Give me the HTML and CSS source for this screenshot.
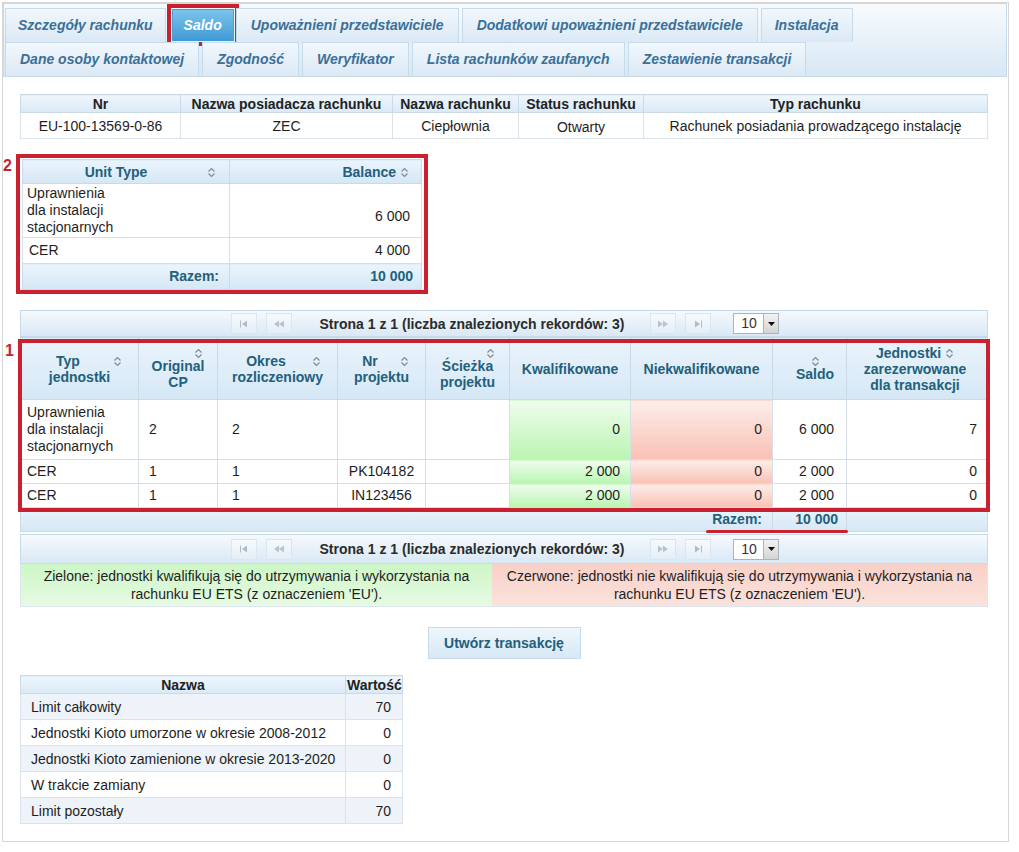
FILE: index.html
```html
<!DOCTYPE html>
<html lang="pl">
<head>
<meta charset="utf-8">
<title>Saldo</title>
<link rel="stylesheet" href="styles.css">
</head>
<body>
<div class="frame">
  <ul class="tabs">
    <li class="tab t1">Szczegóły rachunku</li>
    <li class="tab active">Saldo</li>
    <li class="tab">Upoważnieni przedstawiciele</li>
    <li class="tab">Dodatkowi upoważnieni przedstawiciele</li>
    <li class="tab t-inst">Instalacja</li>
    <li class="tab">Dane osoby kontaktowej</li>
    <li class="tab">Zgodność</li>
    <li class="tab">Weryfikator</li>
    <li class="tab">Lista rachunków zaufanych</li>
    <li class="tab">Zestawienie transakcji</li>
  </ul>

  <div class="panel">
    <table class="info">
      <colgroup><col class="c160"><col class="c212"><col class="c126"><col class="c125"><col></colgroup>
      <thead>
        <tr><th>Nr</th><th>Nazwa posiadacza rachunku</th><th>Nazwa rachunku</th><th>Status rachunku</th><th>Typ rachunku</th></tr>
      </thead>
      <tbody>
        <tr><td>EU-100-13569-0-86</td><td>ZEC</td><td>Ciepłownia</td><td class="status">Otwarty</td><td>Rachunek posiadania prowadzącego instalację</td></tr>
      </tbody>
    </table>

    <div class="annot2">
      <span class="annot-num num2">2</span>
      <table class="units">
        <colgroup><col class="c207"><col></colgroup>
        <thead>
          <tr>
            <th class="ut"><svg class="si si-float" width="9" height="11" viewBox="0 0 9 11"><path d="M1.5 4.5L4.5 1.5L7.5 4.5M1.5 6.5L4.5 9.5L7.5 6.5"/></svg>Unit Type</th>
            <th class="right">Balance <svg class="si" width="9" height="11" viewBox="0 0 9 11"><path d="M1.5 4.5L4.5 1.5L7.5 4.5M1.5 6.5L4.5 9.5L7.5 6.5"/></svg></th>
          </tr>
        </thead>
        <tbody>
          <tr class="tall"><td>Uprawnienia<br>dla instalacji<br>stacjonarnych</td><td class="right low">6 000</td></tr>
          <tr><td class="cer">CER</td><td class="right">4 000</td></tr>
        </tbody>
        <tfoot>
          <tr><td class="right">Razem:</td><td class="right">10 000</td></tr>
        </tfoot>
      </table>
    </div>

    <div class="grid-block">
      <div class="pager">
        <span class="pbtn first"><svg width="10" height="8" viewBox="0 0 10 8"><path d="M1.5 0.5V7.5" stroke="#aebcc7"/><path d="M8 0.5L3 4L8 7.5Z" fill="#aebcc7"/></svg></span>
        <span class="pbtn prev"><svg width="12" height="8" viewBox="0 0 12 8"><path d="M6 0.5L1 4L6 7.5ZM11 0.5L6 4L11 7.5Z" fill="#b7c4ce"/></svg></span>
        <span class="ptext">Strona 1 z 1 (liczba znalezionych rekordów: 3)</span>
        <span class="pbtn next"><svg width="12" height="8" viewBox="0 0 12 8"><path d="M1 0.5L6 4L1 7.5ZM6 0.5L11 4L6 7.5Z" fill="#b7c4ce"/></svg></span>
        <span class="pbtn last"><svg width="10" height="8" viewBox="0 0 10 8"><path d="M2 0.5L7 4L2 7.5Z" fill="#aebcc7"/><path d="M8.5 0.5V7.5" stroke="#aebcc7"/></svg></span>
        <span class="psel"><span class="psel-val">10</span><span class="psel-btn"><svg width="7" height="4" viewBox="0 0 7 4"><path d="M0 0H7L3.5 4Z" fill="#111"/></svg></span></span>
      </div>

      <div class="main-wrap">
        <table class="main">
          <colgroup>
            <col class="w118"><col class="w79"><col class="w120"><col class="w88"><col class="w84"><col class="w121"><col class="w142"><col class="w74"><col>
          </colgroup>
          <thead>
            <tr>
              <th><svg class="si si-float" width="9" height="11" viewBox="0 0 9 11"><path d="M1.5 4.5L4.5 1.5L7.5 4.5M1.5 6.5L4.5 9.5L7.5 6.5"/></svg>Typ<br>jednostki</th>
              <th><span class="si-top"><svg class="si" width="9" height="11" viewBox="0 0 9 11"><path d="M1.5 4.5L4.5 1.5L7.5 4.5M1.5 6.5L4.5 9.5L7.5 6.5"/></svg></span>Original<br>CP</th>
              <th><svg class="si si-float" width="9" height="11" viewBox="0 0 9 11"><path d="M1.5 4.5L4.5 1.5L7.5 4.5M1.5 6.5L4.5 9.5L7.5 6.5"/></svg>Okres<br>rozliczeniowy</th>
              <th><svg class="si si-float" width="9" height="11" viewBox="0 0 9 11"><path d="M1.5 4.5L4.5 1.5L7.5 4.5M1.5 6.5L4.5 9.5L7.5 6.5"/></svg>Nr<br>projektu</th>
              <th><span class="si-top"><svg class="si" width="9" height="11" viewBox="0 0 9 11"><path d="M1.5 4.5L4.5 1.5L7.5 4.5M1.5 6.5L4.5 9.5L7.5 6.5"/></svg></span>Ścieżka<br>projektu</th>
              <th>Kwalifikowane</th>
              <th>Niekwalifikowane</th>
              <th class="saldo-h"><span class="si-top"><svg class="si" width="9" height="11" viewBox="0 0 9 11"><path d="M1.5 4.5L4.5 1.5L7.5 4.5M1.5 6.5L4.5 9.5L7.5 6.5"/></svg></span>Saldo</th>
              <th class="right">Jednostki <svg class="si" width="9" height="11" viewBox="0 0 9 11"><path d="M1.5 4.5L4.5 1.5L7.5 4.5M1.5 6.5L4.5 9.5L7.5 6.5"/></svg><br>zarezerwowane<br>dla transakcji</th>
            </tr>
          </thead>
          <tbody>
            <tr class="tall">
              <td>Uprawnienia<br>dla instalacji<br>stacjonarnych</td>
              <td class="pad10">2</td>
              <td class="pad14">2</td>
              <td class="center"></td>
              <td></td>
              <td class="right green">0</td>
              <td class="right red">0</td>
              <td class="right saldo">6 000</td>
              <td class="right">7</td>
            </tr>
            <tr>
              <td>CER</td>
              <td class="pad10">1</td>
              <td class="pad14">1</td>
              <td class="center">PK104182</td>
              <td></td>
              <td class="right green">2 000</td>
              <td class="right red">0</td>
              <td class="right saldo">2 000</td>
              <td class="right">0</td>
            </tr>
            <tr>
              <td>CER</td>
              <td class="pad10">1</td>
              <td class="pad14">1</td>
              <td class="center">IN123456</td>
              <td></td>
              <td class="right green">2 000</td>
              <td class="right red">0</td>
              <td class="right saldo">2 000</td>
              <td class="right">0</td>
            </tr>
          </tbody>
          <tfoot>
            <tr><td colspan="7" class="right">Razem:</td><td class="right saldo-f">10 000</td><td></td></tr>
          </tfoot>
        </table>
        <div class="redbox"></div>
        <span class="annot-num num1">1</span>
        <span class="underline"></span>
      </div>

      <div class="pager pager2">
        <span class="pbtn first"><svg width="10" height="8" viewBox="0 0 10 8"><path d="M1.5 0.5V7.5" stroke="#aebcc7"/><path d="M8 0.5L3 4L8 7.5Z" fill="#aebcc7"/></svg></span>
        <span class="pbtn prev"><svg width="12" height="8" viewBox="0 0 12 8"><path d="M6 0.5L1 4L6 7.5ZM11 0.5L6 4L11 7.5Z" fill="#b7c4ce"/></svg></span>
        <span class="ptext">Strona 1 z 1 (liczba znalezionych rekordów: 3)</span>
        <span class="pbtn next"><svg width="12" height="8" viewBox="0 0 12 8"><path d="M1 0.5L6 4L1 7.5ZM6 0.5L11 4L6 7.5Z" fill="#b7c4ce"/></svg></span>
        <span class="pbtn last"><svg width="10" height="8" viewBox="0 0 10 8"><path d="M2 0.5L7 4L2 7.5Z" fill="#aebcc7"/><path d="M8.5 0.5V7.5" stroke="#aebcc7"/></svg></span>
        <span class="psel"><span class="psel-val">10</span><span class="psel-btn"><svg width="7" height="4" viewBox="0 0 7 4"><path d="M0 0H7L3.5 4Z" fill="#111"/></svg></span></span>
      </div>

      <div class="legend">
        <div class="leg-green">Zielone: jednostki kwalifikują się do utrzymywania i wykorzystania na rachunku EU ETS (z oznaczeniem 'EU').</div>
        <div class="leg-red">Czerwone: jednostki nie kwalifikują się do utrzymywania i wykorzystania na rachunku EU ETS (z oznaczeniem 'EU').</div>
      </div>
    </div>

    <div class="btn-row"><button class="btn" type="button">Utwórz transakcję</button></div>

    <table class="limits">
      <colgroup><col class="c325"><col></colgroup>
      <thead><tr><th>Nazwa</th><th>Wartość</th></tr></thead>
      <tbody>
        <tr class="odd"><td>Limit całkowity</td><td class="right">70</td></tr>
        <tr><td>Jednostki Kioto umorzone w okresie 2008-2012</td><td class="right">0</td></tr>
        <tr class="odd"><td>Jednostki Kioto zamienione w okresie 2013-2020</td><td class="right">0</td></tr>
        <tr><td>W trakcie zamiany</td><td class="right">0</td></tr>
        <tr class="odd"><td>Limit pozostały</td><td class="right">70</td></tr>
      </tbody>
    </table>
  </div>
</div>
</body>
</html>
```

FILE: styles.css
```css
* { box-sizing: border-box; }

body {
  margin: 0;
  font-family: "Liberation Sans", Arial, sans-serif;
  font-size: 14px;
  color: #1e1e1e;
  background: #fff;
}

.frame {
  margin: 2px 0 0 2px;
  width: 1007px;
  height: 840px;
  border: 1px solid #d6d6d6;
  padding: 0 1px 0 0;
}

/* ---------- tabs ---------- */
.tabs {
  list-style: none;
  margin: 0;
  padding: 4px 1px 0 1px;
  height: 74px;
  display: flex;
  flex-wrap: wrap;
  align-content: flex-start;
  border: 1px solid #c5dbec;
  background: linear-gradient(#f8fbfd, #d7e7f4);
}

.tab {
  height: 34px;
  padding: 8px 14px 0 14px;
  margin-right: 3px;
  line-height: 17px;
  font-weight: bold;
  font-style: italic;
  color: #3a7099;
  border: 1px solid #c5dbec;
  border-bottom: 0;
  background: linear-gradient(#f1f7fc, #dbe9f5);
  white-space: nowrap;
}
.tab.t1 { padding: 8px 12px 0 12px; }
.tab.t-inst { padding: 8px 13px 0 13px; }

.tab.active {
  height: 32px;
  margin: 1px 2px 0 3px;
  padding: 7px 11px 0 11px;
  color: #fff;
  border-color: #4a9fd3;
  background: linear-gradient(#7cc4ec, #3e9ad5);
  outline: 4px solid #c9212f;
  outline-offset: 1px;
}

/* ---------- panel ---------- */
.panel {
  padding: 17px 19px 0 17px;
}

table {
  border-collapse: collapse;
  table-layout: fixed;
}

.right { text-align: right; }
.center { text-align: center; }

/* info table */
.info {
  width: 968px;
  border: 1px solid #c9d9e6;
}
.info th {
  height: 18px;
  padding: 0 3px;
  font-weight: bold;
  color: #222;
  border: 1px solid #c9d9e6;
  background: linear-gradient(#eef6fc, #d9e9f6);
  line-height: 16px;
}
.info td {
  height: 26px;
  padding: 0 3px;
  text-align: center;
  border: 1px solid #dbe3ea;
}
.info td.status { padding-top: 3px; }
.c160 { width: 160px; }
.c212 { width: 212px; }
.c126 { width: 126px; }
.c125 { width: 125px; }

/* annotations */
.annot-num {
  position: absolute;
  font-weight: bold;
  font-size: 16px;
  line-height: 16px;
  color: #c0262f;
}

.annot2 {
  position: relative;
  display: inline-block;
  margin: 15px 0 0 -4px;
  border: 4px solid #c9212f;
  padding: 1px 2px 0 2px;
  vertical-align: top;
}
.num2 { left: -17px; top: 0; }

/* unit table */
.units {
  width: 400px;
  border: 1px solid #c9d9e6;
}
.units th {
  height: 24px;
  padding: 0 12px 0 6px;
  font-weight: bold;
  color: #22607c;
  border: 1px solid #c9d9e6;
  background: linear-gradient(#eaf4fc, #d5e7f5);
}
.units th.ut { padding-right: 13px; }
.units td {
  padding: 1px 11px 1px 4px;
  line-height: 17px;
  height: 26px;
  border: 1px solid #d6dfe7;
  vertical-align: middle;
}
.units td.low { padding-top: 12px; }
.units td.cer { padding-left: 6px; }
.units tfoot td {
  height: 26px;
  font-weight: bold;
  color: #22607c;
  background: linear-gradient(#eaf4fc, #d5e7f5);
  border: 1px solid #c9d9e6;
}
.units tfoot td:first-child { padding-right: 10px; }
.units tfoot td:last-child { padding-right: 8px; }
.c207 { width: 207px; }

.si {
  fill: none;
  stroke: #7d8b95;
  stroke-width: 1.2;
  vertical-align: -1px;
}
.si-float {
  float: right;
  margin: 3px 0 0 4px;
}
.si-top {
  display: block;
  height: 10px;
  line-height: 10px;
  text-align: right;
  padding-right: 8px;
}
.si-top .si { vertical-align: top; }

/* grid block */
.grid-block {
  margin-top: 16px;
  width: 968px;
}

.pager {
  height: 27px;
  border: 1px solid #c5dbec;
  background: linear-gradient(#f5f9fd, #d9e8f5);
  display: flex;
  align-items: center;
  justify-content: center;
  padding-left: 2px;
}
.pager2 { margin-top: 2px; height: 30px; }

.pbtn {
  width: 26px;
  height: 21px;
  border: 1px solid #d9e5ef;
  background: linear-gradient(#f6fafd, #e4eef7);
  display: flex;
  align-items: center;
  justify-content: center;
}
.pbtn.prev { margin-left: 9px; }
.pbtn.last { margin-left: 9px; }
.ptext {
  margin: 0 26px 0 28px;
  font-weight: bold;
  color: #2b2b2b;
}
.psel {
  margin-left: 22px;
  display: flex;
  height: 21px;
  border: 1px solid #a9b4bc;
  background: #fff;
}
.psel-val {
  width: 29px;
  line-height: 19px;
  text-align: center;
  color: #333;
  font-size: 14px;
}
.psel-btn {
  width: 15px;
  border-left: 1px solid #a9b4bc;
  background: linear-gradient(#f2f2f2, #d4d4d4);
  display: flex;
  align-items: center;
  justify-content: center;
}

.main-wrap {
  position: relative;
}
.main {
  width: 968px;
  border: 1px solid #c9d9e6;
}
.w118 { width: 118px; }
.w79 { width: 79px; }
.w120 { width: 120px; }
.w88 { width: 88px; }
.w84 { width: 84px; }
.w121 { width: 121px; }
.w142 { width: 142px; }
.w74 { width: 74px; }

.main th {
  height: 62px;
  padding: 4px 6px 4px 6px;
  line-height: 16px;
  font-weight: bold;
  color: #22607c;
  text-align: center;
  vertical-align: middle;
  border: 1px solid #c9d9e6;
  background: linear-gradient(#eaf4fc, #d5e7f5);
}
.main th .si-float { margin-right: 10px; }
.main th .si-top { padding-right: 8px; }
.main th.saldo-h { text-align: right; padding-right: 12px; }
.main th.saldo-h .si-top { padding-right: 14px; }
.main th.right { padding-right: 10px; }

.main td {
  height: 24px;
  padding: 3px 6px;
  line-height: 17px;
  border: 1px solid #d6dfe7;
  vertical-align: middle;
}
.main tr.tall td { padding-top: 4px; padding-bottom: 4px; }
.main td.right { padding-right: 10px; }
.main td.saldo { padding-right: 12px; }
.main td.pad10 { padding-left: 10px; }
.main td.pad14 { padding-left: 14px; }
.main td.green {
  background: linear-gradient(#effdee, #baf5b1);
}
.main td.red {
  background: linear-gradient(#fdeeea, #f9c1b4);
}
.main tfoot td {
  height: 24px;
  padding: 0 10px;
  font-weight: bold;
  color: #22607c;
  background: linear-gradient(#eaf4fc, #d5e7f5);
  border: 1px solid #c9d9e6;
}
.main tfoot td.saldo-f { padding-right: 8px; }

.redbox {
  position: absolute;
  top: 2px;
  left: -2px;
  right: -2px;
  bottom: 20px;
  border: 4px solid #c9212f;
}
.num1 { left: -15px; top: 6px; }
.underline {
  position: absolute;
  left: 686px;
  bottom: -1px;
  width: 142px;
  height: 3px;
  border-radius: 2px;
  background: #c9212f;
}

.legend {
  display: flex;
  height: 43px;
  border: 1px solid #dde6ee;
  border-top: 0;
}
.legend div {
  display: flex;
  align-items: center;
  justify-content: center;
  text-align: center;
  line-height: 18px;
  padding: 0 6px;
}
.leg-green {
  width: 471px;
  background: linear-gradient(#cdf6c5, #e6fbe3);
}
.leg-red {
  flex: 1;
  background: linear-gradient(#f8d0c7, #fbe3dd);
}

.btn-row {
  margin-top: 20px;
  width: 968px;
  text-align: center;
}
.btn {
  height: 32px;
  width: 153px;
  padding: 0;
  font-family: inherit;
  font-size: 14px;
  font-weight: bold;
  color: #22607c;
  border: 1px solid #c5dbec;
  background: linear-gradient(#eef6fc, #d7e8f6);
}

.limits {
  margin-top: 16px;
  width: 383px;
  border: 1px solid #d3dde6;
}
.c325 { width: 325px; }
.limits th {
  height: 18px;
  padding: 0 1px;
  line-height: 16px;
  font-weight: bold;
  color: #222;
  border: 1px solid #c9d9e6;
  background: linear-gradient(#eef6fc, #d9e9f6);
}
.limits td {
  height: 26px;
  padding: 0 11px 0 10px;
  border: 1px solid #dbe3ea;
  white-space: nowrap;
}
.limits td:first-child { padding-right: 2px; }
.limits tr.odd td { background: #eef3f9; }
```
